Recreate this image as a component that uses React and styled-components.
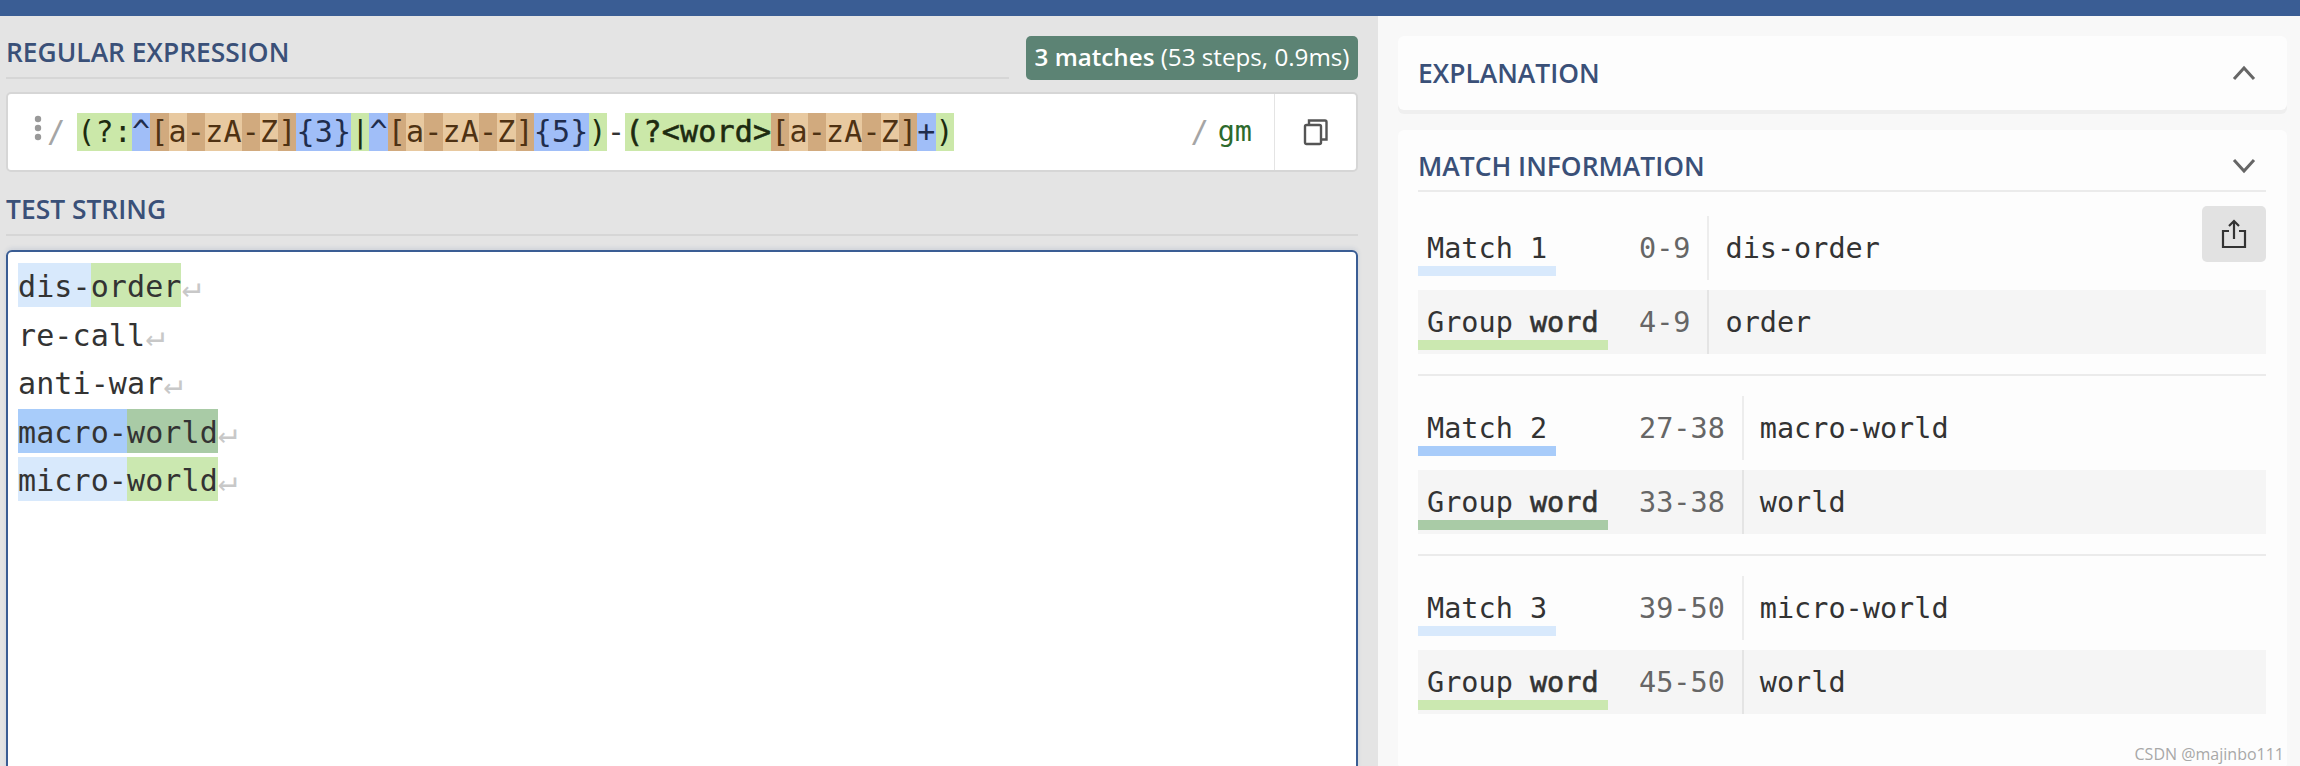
import React from "react";
import styled, { createGlobalStyle } from "styled-components";

const mono = `"DejaVu Sans Mono", "Liberation Mono", monospace`;
const sans = `"Open Sans", "Noto Sans", sans-serif`;

const GlobalStyle = createGlobalStyle`
  html, body {
    margin: 0;
    padding: 0;
    background: #f8f8f8;
  }
`;

const Page = styled.div`
  width: 2300px;
  height: 766px;
  overflow: hidden;
  display: flex;
  flex-direction: column;
`;

const TopBar = styled.div`
  height: 16px;
  flex: none;
  background: #3a5d94;
`;

const Columns = styled.div`
  flex: 1;
  display: flex;
  min-height: 0;
`;

const LeftPane = styled.div`
  width: 1378px;
  flex: none;
  box-sizing: border-box;
  padding: 20px 20px 0 6px;
  background: #e4e4e4;
`;

const RightPane = styled.div`
  flex: 1;
  padding: 20px 13px 0 20px;
  background: #f8f8f8;
`;

const HeaderRow = styled.div`
  display: flex;
  align-items: flex-start;
  gap: 17px;
  height: 44px;
`;

const SectionTitle = styled.div`
  flex: 1;
  height: 43px;
  box-sizing: border-box;
  font: 600 26.4px/28px ${sans};
  color: #3a5078;
  border-bottom: 2px solid #d6d6d6;
  padding-top: 2px;
  white-space: nowrap;
`;

const TestTitle = styled(SectionTitle)`
  flex: none;
  margin-top: 21px;
`;

const Badge = styled.div`
  width: 332px;
  height: 44px;
  box-sizing: border-box;
  border-radius: 5px;
  background: #5c8374;
  color: #fff;
  font: 400 24.2px/42px ${sans};
  text-align: center;
  white-space: nowrap;

  b {
    font-weight: 600;
  }
`;

const RegexBox = styled.div`
  margin-top: 12px;
  height: 80px;
  box-sizing: border-box;
  display: flex;
  align-items: center;
  background: #fff;
  border: 2px solid #d6d6d6;
  border-radius: 5px;
`;

const DragDots = styled.svg`
  margin-left: 26px;
  width: 8px;
  height: 28px;
  flex: none;
  margin-top: -6px;
`;

const Slash = styled.span`
  font: 400 30.4px/38px ${mono};
  color: #a5a5a5;
`;

const LeadSlash = styled(Slash)`
  margin-left: 5px;
  margin-right: 12px;
`;

const Pattern = styled.div`
  flex: 1;
  display: flex;
  font: 400 30px/38px ${mono};
  letter-spacing: 0.19px;
  white-space: pre;
`;

const tokenColors = {
  group: ["#cbe8a9", "#1d2b10"],
  meta: ["#a0bef8", "#1f2d4d"],
  setEdge: ["#d1aa7e", "#4f3213"],
  set: ["#e8c9a0", "#4f3213"],
  plain: ["transparent", "#333"],
};

const Token = styled.span`
  background: ${(p) => tokenColors[p.$kind][0]};
  color: ${(p) => tokenColors[p.$kind][1]};
  -webkit-text-stroke: ${(p) => (p.$bold ? "0.6px" : "0")};
`;

const Flags = styled.span`
  font: 400 28.5px/38px ${mono};
  color: #2d6a2d;
  margin-left: 9px;
  margin-right: 22px;
`;

const CopyCell = styled.div`
  width: 81px;
  align-self: stretch;
  flex: none;
  display: flex;
  align-items: center;
  justify-content: center;
  border-left: 1px solid #e4e4e4;
  color: #555;
`;

const TestBox = styled.div`
  margin-top: 14px;
  height: 560px;
  box-sizing: border-box;
  padding: 11px 0 0 10px;
  background: #fff;
  border: 2px solid #3a5d94;
  border-radius: 6px;
  box-shadow: 0 -2px 4px rgba(58, 93, 148, 0.12);
`;

const TestLine = styled.div`
  height: 48.5px;
  display: flex;
  align-items: flex-start;
  font: 400 30px/47px ${mono};
  letter-spacing: 0.1px;
  color: #333;
  white-space: pre;
`;

const Hit = styled.span`
  height: 44px;
  background: ${(p) => p.$bg};
`;

const Newline = styled.span`
  color: #c8c8c8;
  font-size: 32px;
`;

const Card = styled.div`
  background: #fdfdfd;
  border-radius: 6px;
  padding: 0 21px 0 20px;
  box-shadow: 0 4px 0 #efefef;
`;

const ExplainCard = styled(Card)`
  height: 74px;
  display: flex;
  align-items: center;
  justify-content: space-between;
`;

const InfoCard = styled(Card)`
  position: relative;
  margin-top: 20px;
  height: 640px;
`;

const CardTitle = styled.div`
  font: 600 26.4px/32px ${sans};
  color: #3a5078;
`;

const InfoHead = styled.div`
  height: 62px;
  box-sizing: border-box;
  padding-top: 12px;
  display: flex;
  align-items: center;
  justify-content: space-between;
  border-bottom: 2px solid #ebebeb;
`;

const Chevron = styled.svg`
  width: 24px;
  height: 16px;
  margin-right: 10px;
  color: #666;
`;

const ShareButton = styled.button`
  position: absolute;
  top: 76px;
  right: 21px;
  width: 64px;
  height: 56px;
  padding: 0;
  border: 0;
  border-radius: 5px;
  background: #e2e2e2;
  color: #333;
  display: flex;
  align-items: center;
  justify-content: center;
`;

const MatchBlock = styled.div`
  display: grid;
  grid-template-columns: 221px auto 1fr;
  row-gap: 10px;
  padding: ${(p) => (p.$first ? "24px" : "20px")} 0 20px;
  font: 400 28.5px/66px ${mono};
  border-bottom: ${(p) => (p.$last ? "0" : "2px solid #ebebeb")};
`;

const MatchRow = styled.div`
  display: contents;

  & > div {
    height: 64px;
    background: ${(p) => (p.$shaded ? "#f5f5f5" : "transparent")};
  }
`;

const LabelCell = styled.div`
  display: flex;
  align-items: flex-start;
`;

const Label = styled.span`
  box-sizing: border-box;
  height: 60px;
  padding: 0 9px;
  color: #333;
  white-space: pre;
  border-bottom: 10px solid ${(p) => p.$color};

  b {
    font-weight: 400;
    -webkit-text-stroke: 0.6px;
  }
`;

const RangeCell = styled.div`
  padding-right: 17px;
  text-align: right;
  color: #666;
`;

const ValueCell = styled.div`
  padding-left: 16px;
  color: #333;
  border-left: 2px solid ${(p) => (p.$shaded ? "#e4e4e4" : "#ededed")};
`;

const Watermark = styled.div`
  position: absolute;
  right: 3px;
  bottom: 6px;
  font: 400 16px/20px ${sans};
  color: #a8a8a8;
`;

const setTokens = (keyPrefix) =>
  [
    ["[", "setEdge"],
    ["a", "set"],
    ["-", "setEdge"],
    ["zA", "set"],
    ["-", "setEdge"],
    ["Z", "set"],
    ["]", "setEdge"],
  ].map(([text, kind], i) => (
    <Token key={keyPrefix + i} $kind={kind}>
      {text}
    </Token>
  ));

const Regex = () => (
  <Pattern>
    <Token $kind="group">(?:</Token>
    <Token $kind="meta">^</Token>
    {setTokens("a")}
    <Token $kind="meta">{"{3}"}</Token>
    <Token $kind="group">|</Token>
    <Token $kind="meta">^</Token>
    {setTokens("b")}
    <Token $kind="meta">{"{5}"}</Token>
    <Token $kind="group">)</Token>
    <Token $kind="plain">-</Token>
    <Token $kind="group" $bold>
      {"(?<word>"}
    </Token>
    {setTokens("c")}
    <Token $kind="meta">+</Token>
    <Token $kind="group">)</Token>
  </Pattern>
);

const lines = [
  { id: 1, parts: [["dis-", "#d8e9fc"], ["order", "#cbe8b0"]] },
  { id: 2, parts: [["re-call", "transparent"]] },
  { id: 3, parts: [["anti-war", "transparent"]] },
  { id: 4, parts: [["macro-", "#a8ccfa"], ["world", "#a9cba6"]] },
  { id: 5, parts: [["micro-", "#d8e9fc"], ["world", "#cbe8b0"]] },
];

const matches = [
  { n: 1, range: "0-9", text: "dis-order", color: "#d8e9fc", groupRange: "4-9", group: "order", groupColor: "#cbe8b0" },
  { n: 2, range: "27-38", text: "macro-world", color: "#a8ccfa", groupRange: "33-38", group: "world", groupColor: "#a9cba6" },
  { n: 3, range: "39-50", text: "micro-world", color: "#d8e9fc", groupRange: "45-50", group: "world", groupColor: "#cbe8b0" },
];

const App = () => (
  <Page>
    <GlobalStyle />
    <TopBar />
    <Columns>
      <LeftPane>
        <HeaderRow>
          <SectionTitle>REGULAR EXPRESSION</SectionTitle>
          <Badge>
            <b>3 matches</b> (53 steps, 0.9ms)
          </Badge>
        </HeaderRow>
        <RegexBox>
          <DragDots viewBox="0 0 8 28">
            <circle cx="4" cy="4" r="3.2" fill="#999" />
            <circle cx="4" cy="13" r="3.2" fill="#999" />
            <circle cx="4" cy="22" r="3.2" fill="#999" />
          </DragDots>
          <LeadSlash>/</LeadSlash>
          <Regex />
          <Slash>/</Slash>
          <Flags>gm</Flags>
          <CopyCell>
            <svg width="26" height="28" viewBox="0 0 26 28" fill="none" stroke="currentColor" strokeWidth="2.4">
              <rect x="2" y="7" width="16" height="19" rx="1.5" />
              <path d="M6 7V2.5h16a1.5 1.5 0 0 1 1.5 1.5v17.5H18" />
            </svg>
          </CopyCell>
        </RegexBox>
        <TestTitle>TEST STRING</TestTitle>
        <TestBox>
          {lines.map((line) => (
            <TestLine key={line.id}>
              {line.parts.map(([text, bg]) => (
                <Hit key={text} $bg={bg}>
                  {text}
                </Hit>
              ))}
              <Newline>↵</Newline>
            </TestLine>
          ))}
        </TestBox>
      </LeftPane>
      <RightPane>
        <ExplainCard>
          <CardTitle>EXPLANATION</CardTitle>
          <Chevron viewBox="0 0 24 16" fill="none" stroke="currentColor" strokeWidth="3">
            <path d="M2 14L12 3l10 11" />
          </Chevron>
        </ExplainCard>
        <InfoCard>
          <InfoHead>
            <CardTitle>MATCH INFORMATION</CardTitle>
            <Chevron viewBox="0 0 24 16" fill="none" stroke="currentColor" strokeWidth="3">
              <path d="M2 2l10 11L22 2" />
            </Chevron>
          </InfoHead>
          <ShareButton aria-label="Share">
            <svg width="26" height="30" viewBox="0 0 26 30" fill="none" stroke="currentColor" strokeWidth="2.2">
              <path d="M8 12H2v16h22V12h-6" />
              <path d="M13 20V2M8 7l5-5 5 5" />
            </svg>
          </ShareButton>
          {matches.map((m, i) => (
            <MatchBlock key={m.n} $first={i === 0} $last={i === matches.length - 1}>
              <MatchRow>
                <LabelCell>
                  <Label $color={m.color}>Match {m.n}</Label>
                </LabelCell>
                <RangeCell>{m.range}</RangeCell>
                <ValueCell>{m.text}</ValueCell>
              </MatchRow>
              <MatchRow $shaded>
                <LabelCell>
                  <Label $color={m.groupColor}>
                    Group <b>word</b>
                  </Label>
                </LabelCell>
                <RangeCell>{m.groupRange}</RangeCell>
                <ValueCell $shaded>{m.group}</ValueCell>
              </MatchRow>
            </MatchBlock>
          ))}
          <Watermark>CSDN @majinbo111</Watermark>
        </InfoCard>
      </RightPane>
    </Columns>
  </Page>
);

export default App;
